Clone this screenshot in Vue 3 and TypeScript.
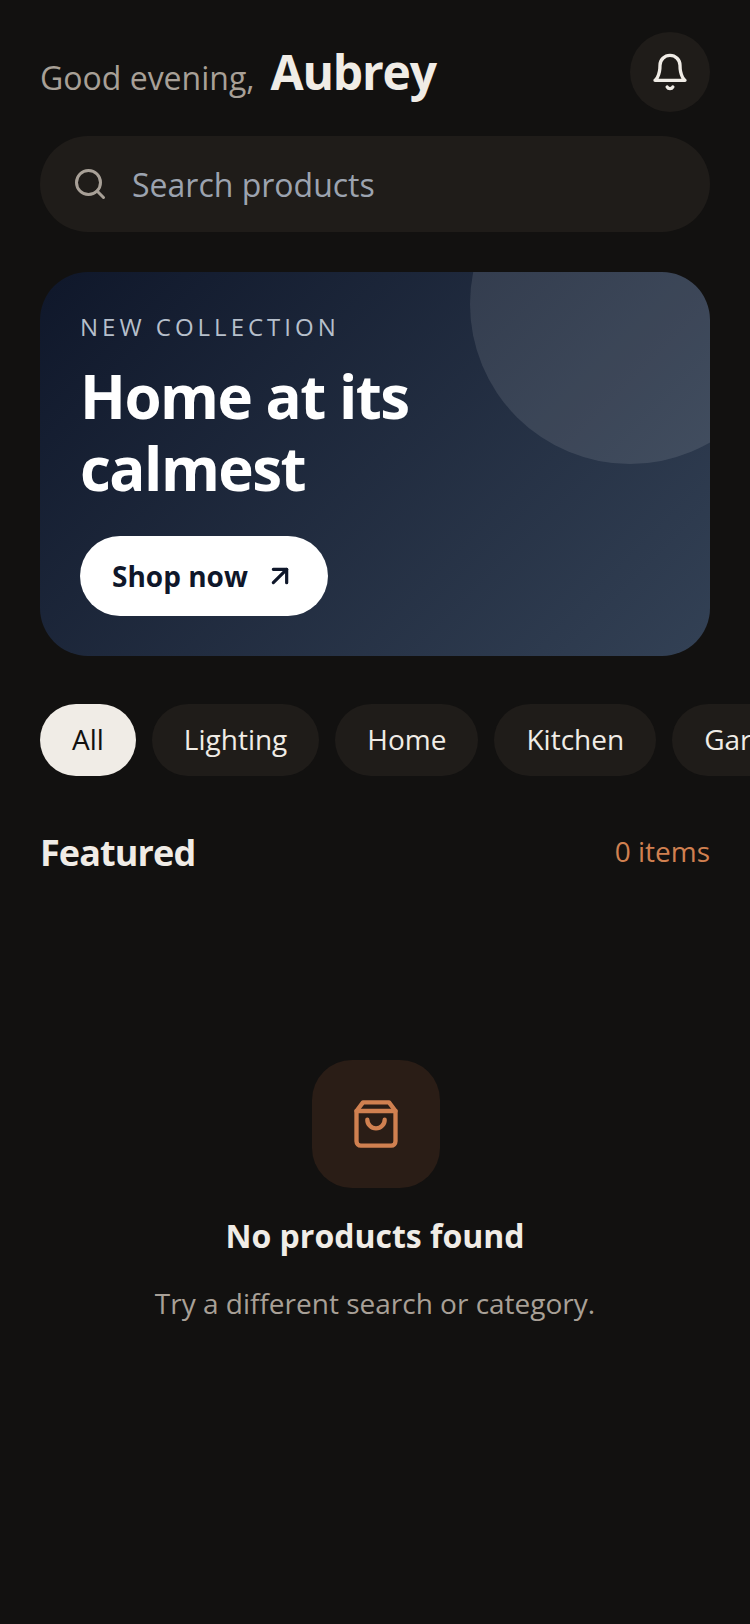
<template>
  <div class="page">
    <header class="top">
      <div class="greeting">
        <span class="hello">Good evening,</span>
        <span class="name">Aubrey</span>
      </div>
      <button class="bell" type="button" aria-label="Notifications">
        <svg width="40" height="40" viewBox="0 0 24 24" fill="none" stroke="currentColor" stroke-width="2" stroke-linecap="round" stroke-linejoin="round">
          <path d="M6 8a6 6 0 0 1 12 0c0 7 3 9 3 9H3s3-2 3-9" />
          <path d="M10.3 21a1.94 1.94 0 0 0 3.4 0" />
        </svg>
      </button>
    </header>

    <div class="search">
      <svg width="36" height="36" viewBox="0 0 24 24" fill="none" stroke="#a8a097" stroke-width="2" stroke-linecap="round" stroke-linejoin="round">
        <circle cx="11" cy="11" r="8" />
        <path d="m21 21-4.3-4.3" />
      </svg>
      <span class="placeholder">Search products</span>
    </div>

    <section class="hero">
      <div class="circle"></div>
      <p class="eyebrow">NEW COLLECTION</p>
      <h1 class="headline">Home at its<br />calmest</h1>
      <button class="shop" type="button">
        <span>Shop now</span>
        <svg width="32" height="32" viewBox="0 0 24 24" fill="none" stroke="currentColor" stroke-width="2.4" stroke-linecap="round" stroke-linejoin="round">
          <path d="M7 7h10v10" />
          <path d="M7 17 17 7" />
        </svg>
      </button>
    </section>

    <nav class="chips">
      <span v-for="(cat, index) in categories" :key="cat" class="chip" :class="{ active: index === 0 }">{{ cat }}</span>
    </nav>

    <div class="section-head">
      <h2 class="section-title">Featured</h2>
      <span class="count">0 items</span>
    </div>

    <div class="empty">
      <div class="empty-icon">
        <svg width="52" height="52" viewBox="0 0 24 24" fill="none" stroke="#d08050" stroke-width="2" stroke-linecap="round" stroke-linejoin="round">
          <path d="M6 2 3 6v14a2 2 0 0 0 2 2h14a2 2 0 0 0 2-2V6l-3-4Z" />
          <path d="M3 6h18" />
          <path d="M16 10a4 4 0 0 1-8 0" />
        </svg>
      </div>
      <h3 class="empty-title">No products found</h3>
      <p class="empty-text">Try a different search or category.</p>
    </div>
  </div>
</template>

<script setup lang="ts">
const categories: string[] = ['All', 'Lighting', 'Home', 'Kitchen', 'Garden']
</script>

<style>
html,
body {
  margin: 0;
  background: #121110;
}
</style>

<style scoped>
.page {
  width: 750px;
  height: 1624px;
  box-sizing: border-box;
  padding-top: 32px;
  overflow: hidden;
  background: #121110;
  color: #f0ece6;
  font-family: "Open Sans", "Noto Sans", sans-serif;
}

.top {
  display: flex;
  align-items: center;
  justify-content: space-between;
  height: 80px;
  margin: 0 40px 24px;
}

.greeting {
  display: flex;
  align-items: baseline;
  gap: 16px;
}

.hello {
  font-size: 32px;
  color: #a8a097;
}

.name {
  font-size: 48px;
  font-weight: 700;
  line-height: 1.2;
  letter-spacing: -0.025em;
}

.bell {
  display: flex;
  align-items: center;
  justify-content: center;
  width: 80px;
  height: 80px;
  padding: 0;
  border: none;
  border-radius: 50%;
  background: #1f1c19;
  color: #f0ece6;
}

.search {
  display: flex;
  align-items: center;
  gap: 24px;
  height: 96px;
  margin: 0 40px 40px;
  padding: 0 32px;
  border-radius: 48px;
  background: #1f1c19;
}

.placeholder {
  font-size: 32px;
  color: #9ca3af;
}

.hero {
  position: relative;
  height: 384px;
  box-sizing: border-box;
  margin: 0 40px 48px;
  padding: 40px;
  overflow: hidden;
  border-radius: 48px;
  background: linear-gradient(135deg, #0f172a, #334155);
  color: #fff;
}

.circle {
  position: absolute;
  top: -128px;
  right: -80px;
  width: 320px;
  height: 320px;
  border-radius: 50%;
  background: rgba(255, 255, 255, 0.1);
}

.eyebrow {
  margin: 0;
  font-size: 24px;
  line-height: 30px;
  letter-spacing: 4px;
  color: #b6bfcb;
}

.headline {
  margin: 18px 0 32px;
  font-size: 60px;
  font-weight: 700;
  line-height: 72px;
  letter-spacing: -0.025em;
}

.shop {
  display: inline-flex;
  align-items: center;
  gap: 16px;
  height: 80px;
  padding: 0 32px;
  border: none;
  border-radius: 40px;
  background: #fff;
  color: #0f172a;
  font-family: inherit;
  font-size: 28px;
  font-weight: 700;
}

.chips {
  display: flex;
  gap: 16px;
  padding: 0 40px;
  margin-bottom: 52px;
}

.chip {
  display: flex;
  flex-shrink: 0;
  align-items: center;
  height: 72px;
  box-sizing: border-box;
  padding: 0 32px 2px;
  border-radius: 36px;
  background: #1f1c19;
  font-size: 28px;
}

.chip.active {
  background: #f0ece6;
  color: #121110;
}

.section-head {
  display: flex;
  align-items: center;
  justify-content: space-between;
  margin: 0 40px;
}

.section-title {
  margin: 0;
  font-size: 36px;
  font-weight: 700;
  letter-spacing: -0.025em;
}

.count {
  margin-bottom: 3px;
  font-size: 28px;
  color: #d08050;
}

.empty {
  display: flex;
  flex-direction: column;
  align-items: center;
  margin-top: 183px;
}

.empty-icon {
  display: flex;
  align-items: center;
  justify-content: center;
  width: 128px;
  height: 128px;
  margin-bottom: 26px;
  margin-left: 2px;
  border-radius: 40px;
  background: #2a1d16;
}

.empty-title {
  margin: 0 0 27px;
  font-size: 32px;
  font-weight: 700;
}

.empty-text {
  margin: 0;
  font-size: 28px;
  color: #a8a097;
}
</style>
